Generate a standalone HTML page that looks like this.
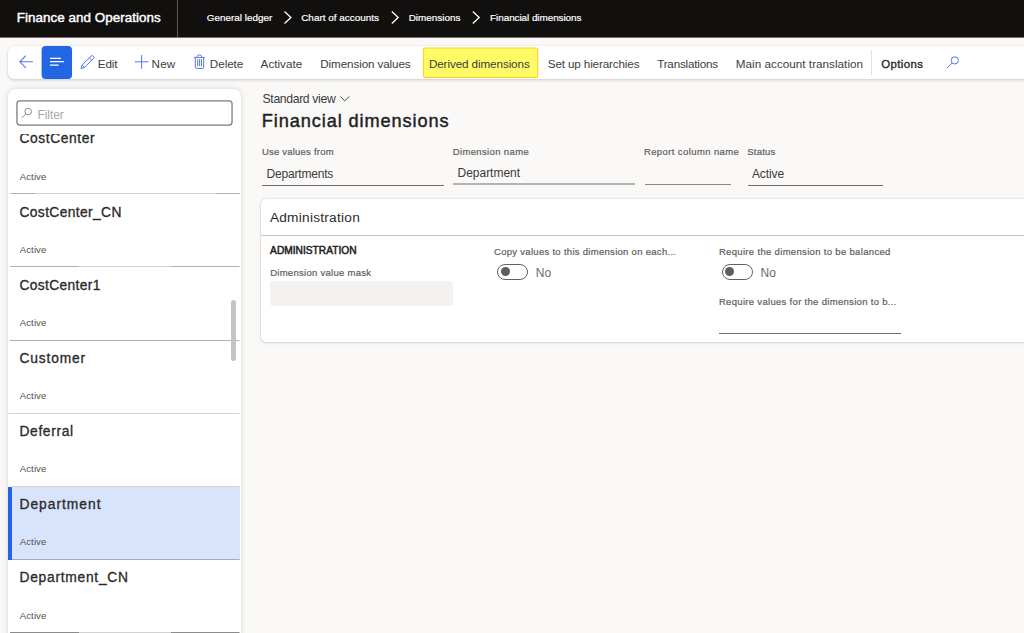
<!DOCTYPE html>
<html><head><meta charset="utf-8"><title>Financial dimensions</title>
<style>
html,body{margin:0;padding:0}
body{width:1024px;height:633px;overflow:hidden;background:#faf9f8;font-family:"Liberation Sans",sans-serif;color:#242424;position:relative}
.x{position:absolute;white-space:nowrap;line-height:1}
.a{position:absolute}
#top{left:0;top:0;width:1024px;height:37px;background:#11100f}
#tb{left:8px;top:46px;width:1030px;height:33px;background:#fff;border-radius:6px;box-shadow:0 0 2px rgba(0,0,0,.16),0 2px 3px rgba(0,0,0,.10)}
#side{left:8px;top:88.5px;width:233px;height:560px;background:#fff;border-radius:7px 7px 0 0;box-shadow:0 0 6px rgba(0,0,0,.13),0 0 1px rgba(0,0,0,.12)}
.sep{position:absolute;left:10px;width:230px;height:1px;background:#bdbdbd}
.ul{position:absolute;height:1px;background:#6e6e6e}
svg{position:absolute;overflow:visible}
.tg{position:absolute;width:31px;height:16px;box-sizing:border-box;border:1px solid #64625f;border-radius:8px;background:#fff}
.tg i{position:absolute;left:2.6px;top:2.5px;width:9px;height:9px;border-radius:50%;background:#605e5c}
</style></head><body>
<div class="a" id="top"></div>
<div class="a" style="left:0;top:37px;width:1024px;height:1px;background:#77706c"></div>
<div class="a" style="left:177px;top:0;width:1px;height:37px;background:#5c5b5a"></div>
<svg style="left:0;top:0" width="1024" height="37" fill="none" stroke="#fff" stroke-width="1.3">
 <path d="M284.5 11.6l6.4 5.9-6.4 5.9"/><path d="M391.8 11.6l6.4 5.9-6.4 5.9"/><path d="M472.8 11.6l6.4 5.9-6.4 5.9"/>
</svg>
<div class="a" id="tb"></div>
<svg style="left:40px;top:44px" width="34" height="37" viewBox="40 44 34 37"><rect x="41.6" y="45.9" width="30.4" height="33.2" rx="4" fill="#2266e3"/></svg>
<svg style="left:0;top:40px" width="1024" height="45" viewBox="0 40 1024 45" fill="none" stroke="#5478e8" stroke-width="1">
 <path d="M33 61.8H20M25.9 55.7l-6.1 6.1 6.1 6.1" stroke-width="1.1"/>
 <path d="M50 58.4h11M50 61.7h14M50 65.1h8.6" stroke="#fff" stroke-width="1.3"/>
 <path d="M81 68.6L84.61 67.4L93.45 58.56A1.7 1.7 0 0 0 91.04 56.16L82.2 64.99ZM84.61 67.4L82.2 64.99M91.68 60.33L89.27 57.92"/>
 <path d="M134.8 61.8h13.8M141.6 55.1v13.7"/>
 <path d="M194 57.4h10.8M197.2 57.4v-.6a1.8 1.8 0 0 1 1.8-1.8h.8a1.8 1.8 0 0 1 1.8 1.8v.6M195.3 57.4V67a1.4 1.4 0 0 0 1.4 1.4h5.6a1.4 1.4 0 0 0 1.4-1.4V57.4M197.7 59.2v7M199.6 59.2v7M201.5 59.2v7"/>
 <circle cx="954.8" cy="60.4" r="3.6"/><path d="M952.1 63l-5 5"/>
</svg>
<svg style="left:418px;top:44px" width="126" height="38" viewBox="418 44 126 38"><rect x="423.5" y="48" width="114.2" height="29.3" rx="1.6" fill="#fffb66" stroke="#fbd228" stroke-width="1.2"/></svg>
<div class="a" style="left:871px;top:50px;width:1px;height:25px;background:#e1e1e1"></div>

<div class="a" id="side"></div>
<svg style="left:0;top:96px" width="250" height="34" viewBox="0 96 250 34" fill="none" stroke="#8a8a8a" stroke-width="1">
 <rect x="16.95" y="100.75" width="215.1" height="24.3" rx="3" stroke="#7a7a7a" stroke-width="1.25" fill="#fff"/>
 <circle cx="28.2" cy="111.6" r="3.3"/><path d="M25.8 114.1l-4.1 3.8"/>
</svg>
<div class="a" style="left:9px;top:126px;width:230px;height:8px;background:#fff;z-index:3"></div>
<div class="a" style="left:8px;top:486.5px;width:232px;height:73px;background:#d8e4fb"></div>
<div class="a" style="left:8px;top:486.5px;width:4px;height:73px;background:#2563e6"></div>
<svg style="left:0;top:180px" width="250" height="453" viewBox="0 180 250 453" fill="none" stroke-width="1">
 <path d="M10.5 193.5H239.6M10 266.5H239.5M8.5 413.5H239.5M12 486.5H239.5M10 632.5H239.5" stroke="#d2d2d2"/>
 <path d="M10.5 193.5H35M216 193.5H239.6M10 266.5H79M171 266.5H239.5M10 340.5H239.5" stroke="#b0b0b0"/>
 <path d="M10 632.5H79M171 632.5H239.5" stroke="#8c8c8c"/>
 <path d="M12 559.5H239.5" stroke="#a3abbd"/>
</svg>
<div class="x" style="left:19.47px;top:132.42px;font-size:13.8px;letter-spacing:0.590px;color:#2b2b2b;font-weight:400;-webkit-text-stroke-width:0.33px;">CostCenter</div>
<div class="x" style="left:19.72px;top:171.77px;font-size:9.6px;letter-spacing:0.103px;color:#505050;font-weight:400;">Active</div>
<div class="x" style="left:19.47px;top:205.57px;font-size:13.8px;letter-spacing:0.376px;color:#2b2b2b;font-weight:400;-webkit-text-stroke-width:0.33px;">CostCenter_CN</div>
<div class="x" style="left:19.72px;top:245.07px;font-size:9.6px;letter-spacing:0.103px;color:#505050;font-weight:400;">Active</div>
<div class="x" style="left:19.47px;top:278.72px;font-size:13.8px;letter-spacing:0.348px;color:#2b2b2b;font-weight:400;-webkit-text-stroke-width:0.33px;">CostCenter1</div>
<div class="x" style="left:19.72px;top:317.97px;font-size:9.6px;letter-spacing:0.103px;color:#505050;font-weight:400;">Active</div>
<div class="x" style="left:19.47px;top:351.87px;font-size:13.8px;letter-spacing:0.846px;color:#2b2b2b;font-weight:400;-webkit-text-stroke-width:0.33px;">Customer</div>
<div class="x" style="left:19.72px;top:391.17px;font-size:9.6px;letter-spacing:0.103px;color:#505050;font-weight:400;">Active</div>
<div class="x" style="left:19.47px;top:425.02px;font-size:13.8px;letter-spacing:0.638px;color:#2b2b2b;font-weight:400;-webkit-text-stroke-width:0.33px;">Deferral</div>
<div class="x" style="left:19.72px;top:464.27px;font-size:9.6px;letter-spacing:0.103px;color:#505050;font-weight:400;">Active</div>
<div class="x" style="left:19.47px;top:498.17px;font-size:13.8px;letter-spacing:0.999px;color:#2b2b2b;font-weight:400;-webkit-text-stroke-width:0.33px;">Department</div>
<div class="x" style="left:19.72px;top:536.97px;font-size:9.6px;letter-spacing:0.103px;color:#505050;font-weight:400;">Active</div>
<div class="x" style="left:19.47px;top:571.32px;font-size:13.8px;letter-spacing:0.738px;color:#2b2b2b;font-weight:400;-webkit-text-stroke-width:0.33px;">Department_CN</div>
<div class="x" style="left:19.72px;top:610.77px;font-size:9.6px;letter-spacing:0.103px;color:#505050;font-weight:400;">Active</div>

<div class="a" style="left:231px;top:300px;width:5px;height:61px;background:#c4c4c4;border-radius:2.5px"></div>

<svg style="left:0;top:90px" width="400" height="20" fill="none" stroke="#444" stroke-width="1"><path d="M340.4 6.5l4.4 4.4 4.4-4.4"/></svg>
<div class="ul" style="left:262px;top:185px;width:182px"></div>
<div class="ul" style="left:453px;top:183px;width:182px;height:2px;background:#b3b3b3"></div>
<div class="ul" style="left:644.5px;top:183.5px;width:86.5px;background:#8a8a8a"></div>
<div class="ul" style="left:748px;top:185px;width:135px"></div>

<div class="a" style="left:261.4px;top:199px;width:790px;height:142.7px;background:#fff;border-radius:5px;box-shadow:0 0 2px rgba(0,0,0,.18),0 1px 3px rgba(0,0,0,.12)"></div>
<div class="a" style="left:261.4px;top:235px;width:790px;height:1px;background:#c4c4c4"></div>
<div class="a" style="left:269.7px;top:281px;width:183px;height:24.8px;background:#f3f2f1;border-radius:3px"></div>
<div class="tg" style="left:497.4px;top:263.5px"><i></i></div>
<div class="tg" style="left:721.6px;top:263.5px"><i></i></div>
<div class="ul" style="left:719px;top:333px;width:182.2px"></div>
<div class="x" style="left:16.80px;top:11.26px;font-size:13.4px;letter-spacing:0.046px;color:#fff;font-weight:400;-webkit-text-stroke-width:0.43px;">Finance and Operations</div>
<div class="x" style="left:206.81px;top:12.72px;font-size:9.9px;letter-spacing:0.019px;color:#fff;font-weight:400;-webkit-text-stroke-width:0.20px;">General ledger</div>
<div class="x" style="left:301.21px;top:12.72px;font-size:9.9px;letter-spacing:0.028px;color:#fff;font-weight:400;-webkit-text-stroke-width:0.20px;">Chart of accounts</div>
<div class="x" style="left:408.71px;top:12.72px;font-size:9.9px;letter-spacing:0.010px;color:#fff;font-weight:400;-webkit-text-stroke-width:0.20px;">Dimensions</div>
<div class="x" style="left:490.11px;top:12.72px;font-size:9.9px;letter-spacing:-0.046px;color:#fff;font-weight:400;-webkit-text-stroke-width:0.20px;">Financial dimensions</div>
<div class="x" style="left:97.80px;top:58.05px;font-size:11.7px;letter-spacing:-0.143px;color:#3d3d3d;font-weight:400;">Edit</div>
<div class="x" style="left:151.60px;top:58.05px;font-size:11.7px;letter-spacing:0.093px;color:#3d3d3d;font-weight:400;">New</div>
<div class="x" style="left:209.80px;top:58.05px;font-size:11.7px;letter-spacing:-0.054px;color:#3d3d3d;font-weight:400;">Delete</div>
<div class="x" style="left:260.60px;top:58.05px;font-size:11.7px;letter-spacing:0.011px;color:#3d3d3d;font-weight:400;">Activate</div>
<div class="x" style="left:320.30px;top:58.05px;font-size:11.7px;letter-spacing:-0.124px;color:#3d3d3d;font-weight:400;">Dimension values</div>
<div class="x" style="left:428.90px;top:58.05px;font-size:11.7px;letter-spacing:-0.104px;color:#3d3d3d;font-weight:400;">Derived dimensions</div>
<div class="x" style="left:547.80px;top:58.05px;font-size:11.7px;letter-spacing:-0.146px;color:#3d3d3d;font-weight:400;">Set up hierarchies</div>
<div class="x" style="left:657.20px;top:58.05px;font-size:11.7px;letter-spacing:-0.205px;color:#3d3d3d;font-weight:400;">Translations</div>
<div class="x" style="left:735.80px;top:58.05px;font-size:11.7px;letter-spacing:0.024px;color:#3d3d3d;font-weight:400;">Main account translation</div>
<div class="x" style="left:881.22px;top:58.95px;font-size:11.4px;letter-spacing:0.411px;color:#2b2b2b;font-weight:400;-webkit-text-stroke-width:0.36px;">Options</div>
<div class="x" style="left:37.38px;top:108.64px;font-size:12px;letter-spacing:-0.045px;color:#a8a8a8;font-weight:400;">Filter</div>
<div class="x" style="left:262.57px;top:93.07px;font-size:12.2px;letter-spacing:-0.340px;color:#3a3a3a;font-weight:400;">Standard view</div>
<div class="x" style="left:261.81px;top:112.49px;font-size:18.2px;letter-spacing:0.889px;color:#1f1f1f;font-weight:400;-webkit-text-stroke-width:0.44px;">Financial dimensions</div>
<div class="x" style="left:261.93px;top:146.76px;font-size:9.5px;letter-spacing:0.214px;color:#5e5e5e;font-weight:400;-webkit-text-stroke-width:0.21px;">Use values from</div>
<div class="x" style="left:452.73px;top:146.76px;font-size:9.5px;letter-spacing:0.361px;color:#5e5e5e;font-weight:400;-webkit-text-stroke-width:0.21px;">Dimension name</div>
<div class="x" style="left:643.93px;top:146.76px;font-size:9.5px;letter-spacing:0.398px;color:#5e5e5e;font-weight:400;-webkit-text-stroke-width:0.21px;">Report column name</div>
<div class="x" style="left:747.33px;top:146.76px;font-size:9.5px;letter-spacing:0.185px;color:#5e5e5e;font-weight:400;-webkit-text-stroke-width:0.21px;">Status</div>
<div class="x" style="left:266.48px;top:167.54px;font-size:12px;letter-spacing:-0.182px;color:#3b3b3b;font-weight:400;">Departments</div>
<div class="x" style="left:457.58px;top:166.64px;font-size:12px;letter-spacing:-0.030px;color:#3b3b3b;font-weight:400;">Department</div>
<div class="x" style="left:751.88px;top:167.54px;font-size:12px;letter-spacing:-0.065px;color:#3b3b3b;font-weight:400;">Active</div>
<div class="x" style="left:269.88px;top:210.50px;font-size:13.7px;letter-spacing:0.245px;color:#2b2b2b;font-weight:400;">Administration</div>
<div class="x" style="left:270.09px;top:246.17px;font-size:10.2px;letter-spacing:0.008px;color:#1f1f1f;font-weight:400;-webkit-text-stroke-width:0.51px;">ADMINISTRATION</div>
<div class="x" style="left:270.13px;top:268.46px;font-size:9.5px;letter-spacing:0.279px;color:#5e5e5e;font-weight:400;-webkit-text-stroke-width:0.21px;">Dimension value mask</div>
<div class="x" style="left:494.03px;top:247.26px;font-size:9.5px;letter-spacing:0.292px;color:#5e5e5e;font-weight:400;-webkit-text-stroke-width:0.21px;">Copy values to this dimension on each...</div>
<div class="x" style="left:718.93px;top:247.26px;font-size:9.5px;letter-spacing:0.326px;color:#5e5e5e;font-weight:400;-webkit-text-stroke-width:0.21px;">Require the dimension to be balanced</div>
<div class="x" style="left:718.93px;top:297.16px;font-size:9.5px;letter-spacing:0.311px;color:#5e5e5e;font-weight:400;-webkit-text-stroke-width:0.21px;">Require values for the dimension to b...</div>
<div class="x" style="left:535.78px;top:266.74px;font-size:12px;letter-spacing:0.128px;color:#696969;font-weight:400;">No</div>
<div class="x" style="left:760.38px;top:266.74px;font-size:12px;letter-spacing:0.128px;color:#696969;font-weight:400;">No</div>

</body></html>
